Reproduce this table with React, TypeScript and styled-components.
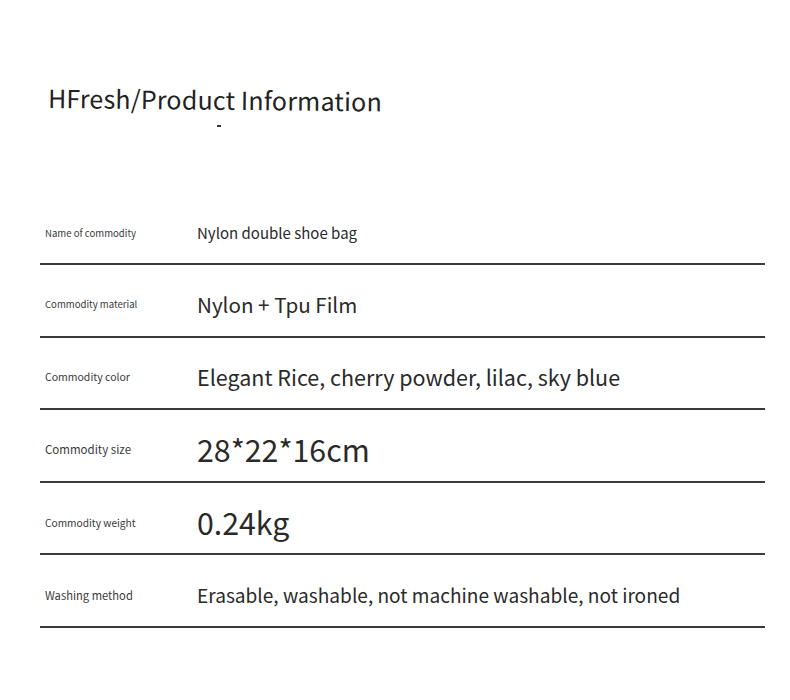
import React from "react";
import styled, {createGlobalStyle} from "styled-components";

const GlobalStyle = createGlobalStyle`
  body {
    margin: 0;
    background: #ffffff;
    font-family: "Noto Sans CJK SC", "Noto Sans", sans-serif;
    color: #2b2b2b;
  }
`

export const Page = styled.div`
  width: 790px;
  height: 700px;
  padding: 0 25px 0 40px;
  box-sizing: border-box;
`

export const Header = styled.div`
  padding-top: 79px;
  height: 194px;
  box-sizing: border-box;
`

export const Title = styled.h1`
  margin: 0 0 0 8px;
  font-size: 25px;
  font-weight: 400;
  letter-spacing: 0.2px;
  color: #222;
  transform: rotate(0.6deg);
  transform-origin: left center;
  white-space: nowrap;
`

export const Dash = styled.div`
  width: 4px;
  height: 2px;
  background: #333;
  margin: 10px 0 0 177px;
`

export const Row = styled.div`
  display: flex;
  align-items: center;
  height: 71px;
  padding-top: 8px;
  box-sizing: border-box;
  border-bottom: 2px solid #3a3a3a;
  & + & {
    height: 72.6px;
  }
`

export const Label = styled.div<{ $size: number }>`
  width: 157px;
  padding-left: 5px;
  box-sizing: border-box;
  font-size: ${({$size}) => $size}px;
  color: #3a3a3a;
  white-space: nowrap;
`

export const Value = styled.div<{ $size: number }>`
  font-size: ${({$size}) => $size}px;
  color: #2a2a2a;
  white-space: nowrap;
`

const rows = [
    {label: "Name of commodity", labelSize: 9.6, value: "Nylon double shoe bag", valueSize: 15},
    {label: "Commodity material", labelSize: 9.6, value: "Nylon + Tpu Film", valueSize: 20.6},
    {label: "Commodity color", labelSize: 10.5, value: "Elegant Rice, cherry powder, lilac, sky blue", valueSize: 21.5},
    {label: "Commodity size", labelSize: 11.5, value: "28*22*16cm", valueSize: 30.3},
    {label: "Commodity weight", labelSize: 10.2, value: "0.24kg", valueSize: 30.3},
    {label: "Washing method", labelSize: 11.2, value: "Erasable, washable, not machine washable, not ironed", valueSize: 19.1},
]

const App = () => {
    return (
        <Page>
            <GlobalStyle/>
            <Header>
                <Title>HFresh/Product Information</Title>
                <Dash/>
            </Header>

            {rows.map((row) => (
                <Row key={row.label}>
                    <Label $size={row.labelSize}>{row.label}</Label>
                    <Value $size={row.valueSize}>{row.value}</Value>
                </Row>
            ))}
        </Page>
    );
};

export default App;
